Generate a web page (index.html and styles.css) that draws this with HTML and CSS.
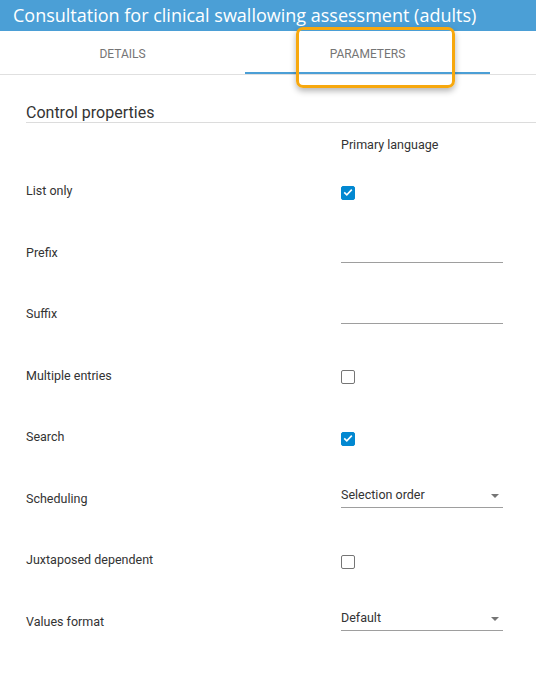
FILE: index.html
```html
<!DOCTYPE html>
<html>
<head>
<meta charset="utf-8">
<link rel="stylesheet" href="styles.css">
</head>
<body>
<header class="titlebar">Consultation for clinical swallowing assessment (adults)</header>
<nav class="tabs">
  <div class="tab">DETAILS</div>
  <div class="tab active">PARAMETERS</div>
  <div class="highlight"></div>
</nav>
<main class="content">
  <h2 class="section-title">Control properties</h2>
  <div class="row header-row">
    <div class="label"></div>
    <div class="control">Primary language</div>
  </div>
  <div class="row">
    <div class="label">List only</div>
    <div class="control"><span class="checkbox checked"><svg viewBox="0 0 14 14"><path d="M3.2 7.3 L5.8 9.8 L10.8 4.6" fill="none" stroke="#fff" stroke-width="1.6"/></svg></span></div>
  </div>
  <div class="row">
    <div class="label">Prefix</div>
    <div class="control"><div class="input"></div></div>
  </div>
  <div class="row">
    <div class="label">Suffix</div>
    <div class="control"><div class="input"></div></div>
  </div>
  <div class="row">
    <div class="label">Multiple entries</div>
    <div class="control"><span class="checkbox"></span></div>
  </div>
  <div class="row">
    <div class="label">Search</div>
    <div class="control"><span class="checkbox checked"><svg viewBox="0 0 14 14"><path d="M3.2 7.3 L5.8 9.8 L10.8 4.6" fill="none" stroke="#fff" stroke-width="1.6"/></svg></span></div>
  </div>
  <div class="row">
    <div class="label">Scheduling</div>
    <div class="control"><div class="select"><span>Selection order</span><span class="arrow"></span></div></div>
  </div>
  <div class="row">
    <div class="label">Juxtaposed dependent</div>
    <div class="control"><span class="checkbox"></span></div>
  </div>
  <div class="row">
    <div class="label">Values format</div>
    <div class="control"><div class="select"><span>Default</span><span class="arrow"></span></div></div>
  </div>
</main>
</body>
</html>
```
FILE: styles.css
```css
html, body {
  margin: 0;
  padding: 0;
  background: #fff;
}
body {
  font-family: Roboto, "Liberation Sans", sans-serif;
  color: #333;
}
.titlebar {
  height: 31px;
  background: #4b9fd6;
  color: #fff;
  font-family: "Open Sans", sans-serif;
  font-size: 18px;
  line-height: 30px;
  padding-left: 13px;
  white-space: nowrap;
  overflow: hidden;
}
.tabs {
  position: relative;
  display: flex;
  height: 43px;
  border-bottom: 1px solid #e0e0e0;
}
.tab {
  width: 245px;
  text-align: center;
  font-size: 12px;
  color: #757575;
  line-height: 15px;
  padding-top: 16px;
  box-sizing: border-box;
}
.tab.active {
  border-bottom: 2px solid #4b9fd6;
}
.highlight {
  position: absolute;
  left: 296px;
  top: -4px;
  width: 153px;
  height: 55px;
  border: 3px solid #f7a80e;
  border-radius: 7px;
  box-shadow: 0 3px 6px rgba(0, 0, 0, 0.3);
}
.content {
  padding-left: 26px;
}
.section-title {
  margin: 0;
  padding-top: 28px;
  font-size: 16px;
  font-weight: 400;
  line-height: 19px;
  color: #333;
  border-bottom: 1px solid #dcdcdc;
  padding-bottom: 0;
}
.row {
  display: flex;
  align-items: center;
  height: 61.5px;
  font-size: 12.5px;
}
.header-row {
  height: 37px;
  align-items: flex-end;
}
.header-row .control {
  line-height: 15px;
  padding-bottom: 8px;
}
.label {
  width: 315px;
}
.control {
  width: 162px;
  display: flex;
  align-items: center;
}
.checkbox {
  display: block;
  width: 14px;
  height: 14px;
  box-sizing: border-box;
  border: 1.5px solid #757575;
  border-radius: 2px;
  margin-top: 4px;
}
.checkbox.checked {
  background: #0288d1;
  border-color: #0288d1;
}
.checkbox svg {
  display: block;
  width: 14px;
  height: 14px;
  margin: -1.5px;
}
.input {
  width: 162px;
  height: 20px;
  border-bottom: 1px solid #9e9e9e;
}
.select {
  width: 162px;
  height: 20px;
  box-sizing: border-box;
  border-bottom: 1px solid #9e9e9e;
  display: flex;
  justify-content: space-between;
  align-items: flex-start;
  line-height: 14px;
}
.arrow {
  width: 0;
  height: 0;
  border-left: 4px solid transparent;
  border-right: 4px solid transparent;
  border-top: 4px solid #757575;
  margin-top: 6px;
  margin-right: 4px;
}
```
